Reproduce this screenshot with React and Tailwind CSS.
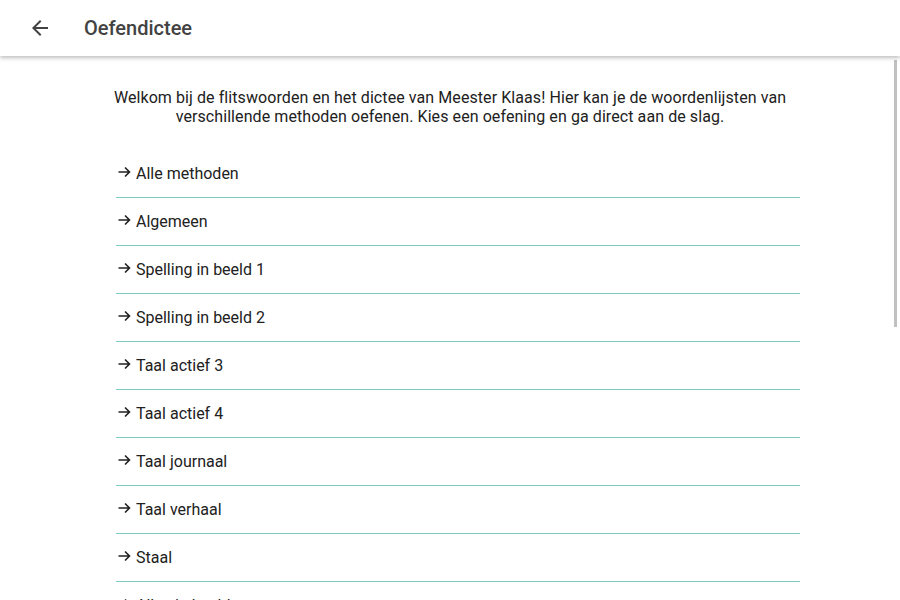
import React from 'react';

const methods = [
  'Alle methoden',
  'Algemeen',
  'Spelling in beeld 1',
  'Spelling in beeld 2',
  'Taal actief 3',
  'Taal actief 4',
  'Taal journaal',
  'Taal verhaal',
  'Staal',
  'Alles in beeld',
];

const ArrowBack = () => (
  <svg width="24" height="24" viewBox="0 0 24 24" fill="#424242">
    <path d="M20 11H7.83l5.59-5.59L12 4l-8 8 8 8 1.41-1.41L7.83 13H20v-2z" />
  </svg>
);

const SmallArrow = () => (
  <svg width="13" height="14" viewBox="0 0 13 14" fill="none" stroke="#212121" strokeWidth="1.6">
    <path d="M0.5 7h11M7 2.5 11.5 7 7 11.5" />
  </svg>
);

export default function App() {
  return (
    <div className="relative h-[600px] overflow-hidden bg-white font-['Roboto',sans-serif] text-[#212121]">
      {/* Toolbar */}
      <header className="relative z-10 flex h-14 items-center bg-white shadow-[0_2px_4px_rgba(0,0,0,0.25)]">
        <button className="ml-4 flex h-12 w-12 items-center justify-center">
          <ArrowBack />
        </button>
        <h1 className="ml-5 text-[20px] font-medium text-[#424242]">Oefendictee</h1>
      </header>

      {/* Content */}
      <main className="mx-[100px]">
        <p className="mt-8 text-center text-[16px] leading-[19px] tracking-[0.08px]">
          Welkom bij de flitswoorden en het dictee van Meester Klaas! Hier kan je de woordenlijsten van verschillende methoden oefenen. Kies een oefening en ga direct aan de slag.
        </p>
        <ul className="mt-6 pl-4">
          {methods.map((m) => (
            <li key={m} className="flex flex-col">
              <div className="flex h-[47px] items-center pt-[1px] text-[16px]">
                <span className="ml-[2px] mr-[5px] -mt-[5px] flex">
                  <SmallArrow />
                </span>
                <span>{m}</span>
              </div>
              <div className="h-px bg-[#80cbc4]" />
            </li>
          ))}
        </ul>
      </main>

      {/* Scrollbar thumb */}
      <div className="absolute right-[3px] top-[60px] h-[267px] w-[3px] bg-[#c1c1c1]" />
    </div>
  );
}
